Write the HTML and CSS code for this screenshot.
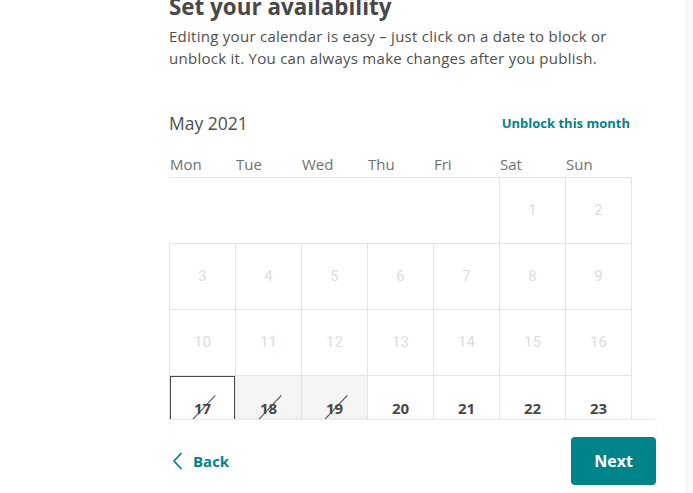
FILE: index.html
```html
<!DOCTYPE html>
<html>
<head>
<meta charset="utf-8">
<link rel="stylesheet" href="styles.css">
</head>
<body>
<div class="page">
  <main class="scroll">
    <div class="content">
      <h1 class="title">Set your availability</h1>
      <p class="lead">Editing your calendar is easy – just click on a date to block or unblock it. You can always make changes after you publish.</p>
      <div class="month-row">
        <span class="month">May 2021</span>
        <a class="unblock">Unblock this month</a>
      </div>
      <div class="weekdays">
        <span>Mon</span><span>Tue</span><span>Wed</span><span>Thu</span><span>Fri</span><span>Sat</span><span>Sun</span>
      </div>
      <div class="grid">
        <div class="cell empty"></div><div class="cell empty"></div><div class="cell empty"></div><div class="cell empty"></div><div class="cell empty"></div>
        <div class="cell past first">1</div><div class="cell past">2</div>
        <div class="cell past first">3</div><div class="cell past">4</div><div class="cell past">5</div><div class="cell past">6</div><div class="cell past">7</div><div class="cell past">8</div><div class="cell past">9</div>
        <div class="cell past first">10</div><div class="cell past">11</div><div class="cell past">12</div><div class="cell past">13</div><div class="cell past">14</div><div class="cell past">15</div><div class="cell past">16</div>
        <div class="cell blocked selected first"><span class="num">17</span></div><div class="cell blocked shaded"><span class="num">18</span></div><div class="cell blocked shaded"><span class="num">19</span></div><div class="cell open">20</div><div class="cell open">21</div><div class="cell open">22</div><div class="cell open">23</div>
        <div class="cell open first">24</div><div class="cell open">25</div><div class="cell open">26</div><div class="cell open">27</div><div class="cell open">28</div><div class="cell open">29</div><div class="cell open">30</div>
      </div>
    </div>
  </main>
  <footer class="footer">
    <a class="back">
      <svg class="chev" width="12" height="18" viewBox="0 0 12 18"><path d="M9 1.5 L2 9 L9 16.5" fill="none" stroke="#008489" stroke-width="1.8" stroke-linecap="round" stroke-linejoin="round"/></svg>
      <span>Back</span>
    </a>
    <button class="next">Next</button>
  </footer>
  <div class="track"></div>
</div>
</body>
</html>
```

FILE: styles.css
```css
html, body {
  margin: 0;
  padding: 0;
  background: #fff;
}
body {
  font-family: "Open Sans", "Liberation Sans", sans-serif;
  color: #484848;
}
.page {
  position: relative;
  height: 493px;
  display: flex;
  flex-direction: column;
  overflow: hidden;
}
.scroll {
  flex: 1;
  overflow: hidden;
}
.content {
  margin-left: 169px;
  width: 487px;
}
.title {
  margin: -6px 0 0;
  font-size: 22.4px;
  line-height: 26px;
  font-weight: 700;
  color: #484848;
}
.lead {
  margin: 5px 0 0;
  font-size: 15px;
  line-height: 22px;
  letter-spacing: 0.27px;
  color: #4f4f4f;
}
.month-row {
  width: 461px;
  margin-top: 42px;
  display: flex;
  justify-content: space-between;
  align-items: center;
  height: 24px;
}
.month {
  font-size: 17.5px;
  line-height: 24px;
  color: #4f4f4f;
}
.unblock {
  color: #008489;
  font-size: 13px;
  font-weight: 700;
}
.weekdays {
  margin-top: 19px;
  margin-bottom: 3px;
  display: grid;
  grid-template-columns: repeat(7, 66px);
  font-size: 15px;
  line-height: 20px;
  color: #717171;
}
.weekdays span {
  padding-left: 1px;
}
.grid {
  display: grid;
  grid-template-columns: repeat(7, 66px);
  grid-auto-rows: 66px;
  width: 462px;
  border-top: 1px solid #e4e4e4;
  border-right: 1px solid #e4e4e4;
}
.cell {
  box-sizing: border-box;
  border-left: 1px solid #e4e4e4;
  border-bottom: 1px solid #e4e4e4;
  display: flex;
  align-items: center;
  justify-content: center;
  font-family: Roboto, "Open Sans", sans-serif;
  font-size: 15px;
  padding-bottom: 1px;
}
.cell.empty {
  border-left: none;
}
.past {
  color: #dddddd;
}
.open, .blocked {
  font-family: "Open Sans", sans-serif;
  font-weight: 700;
  color: #484848;
}
.shaded {
  background: #f5f5f5;
}
.selected {
  box-shadow: inset 0 0 0 1px #484848;
}
.num {
  position: relative;
}
.num::after {
  content: "";
  position: absolute;
  left: 50%;
  top: 50%;
  width: 36px;
  height: 1px;
  margin-left: -18px;
  background: #484848;
  transform: rotate(-47deg);
}
.footer {
  box-sizing: border-box;
  height: 74px;
  margin-left: 169px;
  width: 487px;
  border-top: 1px solid #ebebeb;
  box-shadow: 0 -2px 4px rgba(0,0,0,0.03);
  background: #fff;
  padding: 17px 0 8px 3px;
  display: flex;
  justify-content: space-between;
  align-items: center;
  position: relative;
}
.back {
  display: flex;
  align-items: center;
  gap: 9px;
  color: #008489;
  font-size: 15px;
  font-weight: 700;
}
.chev {
  display: block;
}
.next {
  width: 85px;
  height: 48px;
  border: none;
  border-radius: 4px;
  background: #008489;
  color: #fff;
  font-family: "Open Sans", sans-serif;
  font-size: 16px;
  font-weight: 700;
  padding: 0;
}
.track {
  position: absolute;
  right: 0;
  top: 0;
  bottom: 0;
  width: 8px;
  background: #f9f9f9;
}
```
